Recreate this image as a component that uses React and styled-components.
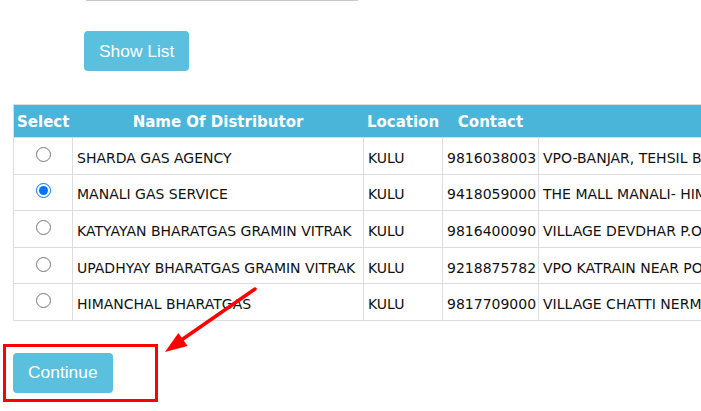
import React from "react";
import styled, { createGlobalStyle } from "styled-components";

const Global = createGlobalStyle`
  html, body { margin: 0; padding: 0; background: #fff; overflow: hidden; }
  body { font-family: "DejaVu Sans", Verdana, sans-serif; }
`;

const Page = styled.div`
  position: relative;
  padding-left: 13px;
  width: 688px;
  height: 411px;
  overflow: hidden;
`;

const FormBlock = styled.div`
  display: flex;
  flex-direction: column;
  align-items: flex-start;
  padding-left: 71px;
`;

const TextInput = styled.input`
  box-sizing: border-box;
  width: 272px;
  height: 34px;
  margin: -33px 0 0 2px;
  border: 1px solid #c8c8c8;
  border-radius: 0;
  padding: 0;
`;

const InfoButton = styled.button`
  box-sizing: border-box;
  height: 40px;
  padding: 0 15px;
  background: #5bc0de;
  color: #fff;
  border: none;
  border-radius: 4px;
  font-family: "Liberation Sans", Arial, sans-serif;
  font-size: 17.4px;
  cursor: pointer;
  margin-top: ${(p) => p.$mt || 0}px;
`;

const Table = styled.table`
  border-collapse: collapse;
  table-layout: fixed;
  width: 900px;
  margin-top: 33px;
  border: 1px solid #ddd;
  font-size: 14px;
  color: #111;
`;

const HeadRow = styled.tr`
  height: 33px;
  background: #4ab5d9;
`;

const Th = styled.th`
  color: #fff;
  font-weight: bold;
  font-size: 15px;
  text-align: center;
  padding: 2px 0 0;
  border: none;
  white-space: nowrap;
`;

const Row = styled.tr`
  height: 36.6px;
`;

const Td = styled.td`
  border: 1px solid #ddd;
  padding: 4px 4px 0;
  white-space: nowrap;
  overflow: hidden;
  text-align: ${(p) => (p.$center ? "center" : "left")};
  vertical-align: middle;
`;

const Radio = styled.input`
  margin: 0 0 7px;
  width: 15px;
  height: 15px;
  vertical-align: middle;
`;

const Highlight = styled.div`
  box-sizing: border-box;
  width: 155px;
  height: 58px;
  margin: 23px 0 0 -10px;
  border: 3px solid #f00;
  padding: 6px 0 0 7px;
`;

const Arrow = styled.svg`
  position: absolute;
  left: 150px;
  top: 280px;
  overflow: visible;
`;

const rows = [
  ["SHARDA GAS AGENCY", "KULU", "9816038003", "VPO-BANJAR, TEHSIL BANJAR, DISTT KULLU"],
  ["MANALI GAS SERVICE", "KULU", "9418059000", "THE MALL MANALI- HIMACHAL PRADESH"],
  ["KATYAYAN BHARATGAS GRAMIN VITRAK", "KULU", "9816400090", "VILLAGE DEVDHAR P.O. BALH"],
  ["UPADHYAY BHARATGAS GRAMIN VITRAK", "KULU", "9218875782", "VPO KATRAIN NEAR POST OFFICE"],
  ["HIMANCHAL BHARATGAS", "KULU", "9817709000", "VILLAGE CHATTI NERMAND"],
];

export default function App() {
  return (
    <>
      <Global />
      <Page>
        <FormBlock>
          <TextInput type="text" />
          <InfoButton $mt={30}>Show List</InfoButton>
        </FormBlock>
        <Table>
          <colgroup>
            <col style={{ width: 59 }} />
            <col style={{ width: 291 }} />
            <col style={{ width: 79 }} />
            <col style={{ width: 96 }} />
            <col />
          </colgroup>
          <thead>
            <HeadRow>
              <Th>Select</Th>
              <Th>Name Of Distributor</Th>
              <Th>Location</Th>
              <Th>Contact</Th>
              <Th></Th>
            </HeadRow>
          </thead>
          <tbody>
            {rows.map((r, i) => (
              <Row key={i}>
                <Td $center>
                  <Radio type="radio" name="dist" defaultChecked={i === 1} />
                </Td>
                <Td>{r[0]}</Td>
                <Td>{r[1]}</Td>
                <Td>{r[2]}</Td>
                <Td>{r[3]}</Td>
              </Row>
            ))}
          </tbody>
        </Table>
        <Highlight>
          <InfoButton>Continue</InfoButton>
        </Highlight>
        <Arrow width="110" height="80" viewBox="0 0 110 80">
          <line x1="105" y1="9" x2="30" y2="61" stroke="#f00" strokeWidth="3.5" strokeLinecap="round" />
          <polygon points="15,72 37.6,66 28.4,52.9" fill="#f00" />
        </Arrow>
      </Page>
    </>
  );
}
